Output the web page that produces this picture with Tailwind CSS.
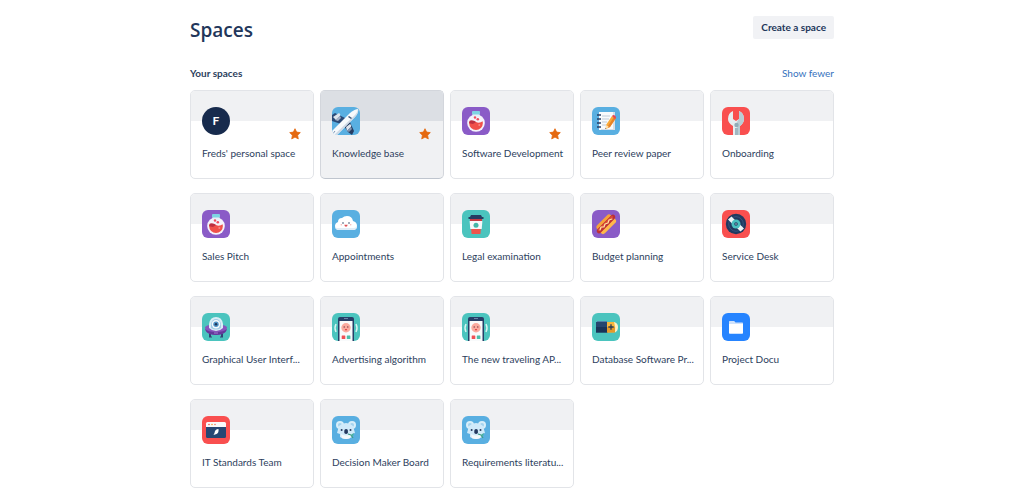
<!DOCTYPE html>
<html lang="en">
<head>
<meta charset="utf-8">
<meta name="viewport" content="width=device-width, initial-scale=1">
<title>Spaces</title>
<script src="https://cdn.jsdelivr.net/npm/@tailwindcss/browser@4"></script>
</head>
<body class="bg-white font-['Lato','Open_Sans',sans-serif] text-[#2c3e5d]">
<svg class="absolute size-0" aria-hidden="true">
  <defs>
    <clipPath id="tile"><rect width="28" height="28" rx="6"/></clipPath>
    <clipPath id="flask-bowl"><circle cx="14" cy="16" r="6.9"/></clipPath>
  </defs>
  <symbol id="user" viewBox="0 0 28 28">
    <circle cx="14" cy="14" r="14" fill="#172b4d"/>
  </symbol>
  <symbol id="plane" viewBox="0 0 28 28">
    <g clip-path="url(#tile)">
      <rect width="28" height="28" fill="#59afe1"/>
      <path d="M0 8 3 6 15 12 9 17 0 14Z" fill="#2b4a77"/>
      <path d="M12 19 17 13 22 24 20 28 16 25Z" fill="#243d63"/>
      <path d="M0 28V24L18 6Q23 2 26 2Q27 5 23 10L5 28Z" fill="#f7fafc"/>
      <path d="M2 28 23 8Q26 5 26 2Q27 6 23 10L5 28Z" fill="#cfdae6"/>
      <path d="M1 10 7 6Q9 7 8 9L4 13Z" fill="#dde5ee"/>
      <path d="m3 13 5-4 1 2-3 3Z" fill="#a4b1c7"/>
      <path d="m14 20 4-3Q20 18 19 20L15 24Z" fill="#dde5ee"/>
      <path d="m15 24 4-4 1 2-3 3Z" fill="#8193b0"/>
      <path d="m17 9 3 2-1 1-3-2Z" fill="#3f5779"/>
      <path d="m0 28 3-4" stroke="#8193b0" stroke-width="1"/>
    </g>
  </symbol>
  <symbol id="flask" viewBox="0 0 28 28">
    <rect width="28" height="28" rx="6" fill="#8a5bc7"/>
    <circle cx="14" cy="16" r="8.8" fill="#f5f3fb"/>
    <path d="M10.5 6h7v4h-7z" fill="#e8eef8"/>
    <rect x="10" y="4" width="8" height="3.4" rx="1" fill="#7ed4e3"/>
    <g clip-path="url(#flask-bowl)">
      <path d="M6 15q4-2 8 0t8-2v12H6z" fill="#f0504a"/>
      <path d="M6 14q5-2 8 1l-3 2-5-1z" fill="#bd3040"/>
    </g>
    <circle cx="13" cy="10.5" r="1.2" fill="#ee4d60"/>
    <circle cx="15.8" cy="12.3" r="1.3" fill="#ee4d60"/>
    <circle cx="17.3" cy="18" r="1" fill="#f98a84"/>
  </symbol>
  <symbol id="notes" viewBox="0 0 28 28">
    <rect width="28" height="28" rx="6" fill="#59afe1"/>
    <path d="M7 5h16v18H7z" fill="#f8fafc"/>
    <path d="M21 5h2v18H9v-1h12z" fill="#d7dfe8"/>
    <path d="M10 9h8M10 12h7M10 15h5M10 18h4" stroke="#c0cbd8"/>
    <path d="M5 8h4M5 12h4M5 16h4M5 20h4" stroke="#263e64" stroke-width="1.3"/>
    <path d="m14 18 6-9 4 2-6 9-4 2z" fill="#f9a93a"/>
    <path d="m16 19 6-9 2 1-6 9-2 1z" fill="#e78227"/>
    <path d="m20 9 1-1q3 0 3 3l-1 1z" fill="#e74852"/>
    <path d="m14 18 3 2-4 2z" fill="#ffe1b5"/>
    <path d="m13 21 1 .5-1 .6z" fill="#263e64"/>
  </symbol>
  <symbol id="wrench" viewBox="0 0 28 28">
    <g clip-path="url(#tile)">
      <rect width="28" height="28" fill="#f94f4f"/>
      <path d="M11 4Q6 6 6 12q0 4 5 7v9h7v-9q4-3 4-7 0-6-5-8v8l-3 2-3-2z" fill="#e6edf0"/>
      <path d="M17 4q5 2 5 8 0 4-4 7v9h-3V15l2-3z" fill="#b9cdd5"/>
      <circle cx="14.5" cy="18" r="2.2" fill="#91adb9"/>
      <path d="M13 21h3v7h-3z" fill="#a0b8c2"/>
    </g>
  </symbol>
  <symbol id="cloud" viewBox="0 0 28 28">
    <rect width="28" height="28" rx="6" fill="#59afe1"/>
    <path d="M7 20q-4 0-4-4 0-3 3-4 0-4 4-4 2-2 5-2 5 0 6 5 4 1 4 5t-4 4z" fill="#fff"/>
    <path d="M3 16q0 2 3 2h16q2 0 3-2 0 4-4 4H7q-4 0-4-4" fill="#e1edf7"/>
    <circle cx="11" cy="13" r=".8" fill="#304463"/><circle cx="17" cy="13" r=".8" fill="#304463"/>
    <path d="M12.3 14.7h3.4q-.3 2-1.7 2t-1.7-2" fill="#df4f55"/>
    <circle cx="9.3" cy="14.7" r=".8" fill="#f5b9b6"/><circle cx="18.7" cy="14.7" r=".8" fill="#f5b9b6"/>
  </symbol>
  <symbol id="coffee" viewBox="0 0 28 28">
    <rect width="28" height="28" rx="6" fill="#4bc4be"/>
    <path d="M8 8h12l-1.6 16H9.6z" fill="#ef544c"/>
    <path d="M7.6 11h12.8l-.7 8H8.3z" fill="#f6f8f9"/>
    <path d="M8 9h12v2H8z" fill="#c73c43"/>
    <path d="M9 5h10l1 2h1.5v2h-15V7H8z" fill="#263d61"/>
    <circle cx="14" cy="15.2" r="2.5" fill="#43b6a7"/>
  </symbol>
  <symbol id="hotdog" viewBox="0 0 28 28">
    <rect width="28" height="28" rx="6" fill="#8a5bc7"/>
    <g fill="none" stroke-linecap="round">
      <path d="M7.5 17 17 7.5" stroke="#f6a23a" stroke-width="6"/>
      <path d="M11 21 21 11" stroke="#ffb84a" stroke-width="6"/>
      <path d="M7 21 21 7" stroke="#bd3035" stroke-width="4.6"/>
      <path d="M7 20 20 7" stroke="#df4c37" stroke-width="2"/>
      <path d="m8 20 1-3 3 0 1-3 3-1 1-3 3-1" stroke="#ffe3a0" stroke-width="1.2" stroke-linejoin="round"/>
    </g>
  </symbol>
  <symbol id="disc" viewBox="0 0 28 28">
    <rect width="28" height="28" rx="6" fill="#f94f4f"/>
    <circle cx="14" cy="14" r="10.2" fill="#21395f"/>
    <circle cx="14" cy="14" r="7.3" fill="none" stroke="#36547d"/>
    <path d="M6 9.500 9.500 6.500 14 11 11 14.500zM22 18.500 18.500 21.500 14 17 17 13.500z" fill="#edf3f6"/>
    <circle cx="14" cy="14" r="4.5" fill="#49bfc0"/>
    <circle cx="14" cy="14" r="1.8" fill="#1d4262"/>
    <circle cx="14" cy="14" r=".7" fill="#cce"/>
  </symbol>
  <symbol id="ufo" viewBox="0 0 28 28">
    <rect width="28" height="28" rx="6" fill="#4bc4be"/>
    <path d="M8 18v6M20 18v6" stroke="#304575" stroke-width="2"/>
    <path d="M7 24h3M18 24h3" stroke="#304575"/>
    <path d="M3 14q2-2 5-2h12q3 0 5 2 0 5-5 7-6 2-12 0-5-2-5-7" fill="#8755bd"/>
    <path d="M3 16q3 3 11 3t11-3q-1 4-5 5-6 2-12 0-4-1-5-5" fill="#633a9a"/>
    <path d="M7 15V11q1-7 7-7t7 7v4q-3 3-7 3t-7-3" fill="#d9eef6"/>
    <path d="M9 15v-4q1-5 5-5t5 5v4q-5 3-10 0" fill="#a3cae6"/>
    <circle cx="14" cy="11.2" r="4.2" fill="#f4fafc"/>
    <circle cx="14" cy="11.2" r="2.7" fill="#4e91c5"/><circle cx="14" cy="11.2" r="1.2" fill="#1f3558"/>
    <path d="M12 20h4" stroke="#a77bd3"/>
  </symbol>
  <symbol id="phone" viewBox="0 0 28 28">
    <g clip-path="url(#tile)">
      <rect width="28" height="28" fill="#4bc4be"/>
      <path d="M4 11q-2 4 0 8M24 11q2 4 0 8" fill="none" stroke="#d7f4f1" stroke-width="1.5"/>
      <path d="M6 6q0-2 2-2h12q2 0 2 2v22H6z" fill="#263f67"/>
      <path d="M7.5 8h13v20h-13z" fill="#f8fafb"/>
      <path d="M12 5.5h4" stroke="#6b83a6"/>
      <circle cx="14" cy="14.8" r="4.7" fill="#faaba0"/>
      <circle cx="12.2" cy="14" r=".7" fill="#763b48"/><circle cx="15.8" cy="14" r=".7" fill="#763b48"/>
      <path d="M12.8 16h2.4q-.3 1.5-1.2 1.5T12.8 16" fill="#df464a"/>
      <rect x="9.7" y="22.5" width="3.6" height="3.4" rx=".5" fill="#ee5055"/>
      <rect x="14.8" y="22.5" width="3.6" height="3.4" rx=".5" fill="#4bbda9"/>
    </g>
  </symbol>
  <symbol id="battery" viewBox="0 0 28 28">
    <rect width="28" height="28" rx="6" fill="#4bc4be"/>
    <path d="M4 9h12v10.5H4z" fill="#25466f"/><path d="M4 14h12v5.500H4z" fill="#193458"/>
    <path d="M15 9h7q3 1 3 5.200t-3 5.300h-7z" fill="#f7b63d"/>
    <path d="M22 9q4 1 4 5t-3 5.500q1-5-1-10.500" fill="#fff0c5"/>
    <path d="M15 14h8v5.500h-8z" fill="#e59a2b"/>
    <path d="M19 11.300v5.400M16.300 14h5.400" stroke="#263b57" stroke-width="1.300"/>
    <path d="M5 8.500h10" stroke="#5082a8"/>
  </symbol>
  <symbol id="folder" viewBox="0 0 28 28">
    <rect width="28" height="28" rx="6" fill="#2684ff"/>
    <path d="M7 10V8.500Q7 8 7.700 8h4.500l1.300 1.500h6.800q.7 0 .7.700v1H7z" fill="#cfe2fb"/>
    <path d="M7 11h14v9q0 .8-.8.8H7.800Q7 20.800 7 20z" fill="#fff"/>
  </symbol>
  <symbol id="browser" viewBox="0 0 28 28">
    <rect width="28" height="28" rx="6" fill="#f94f4f"/>
    <path d="M5.500 6h17q1.500 0 1.500 1.500V11H4V7.500Q4 6 5.500 6" fill="#f8fafb"/>
    <path d="M4 11h20v9.500q0 1.500-1.500 1.500h-17Q4 22 4 20.500z" fill="#264773"/>
    <circle cx="7" cy="8.500" r=".8" fill="#ef5350"/><circle cx="10" cy="8.500" r=".8" fill="#ec9b38"/><circle cx="13" cy="8.500" r=".8" fill="#ef7568"/>
    <path d="M16.500 13q-3.500 0-4 4l-1 2 3-1q2.500-1 2-5" fill="#fff"/>
  </symbol>
  <symbol id="koala" viewBox="0 0 28 28">
    <g clip-path="url(#tile)">
      <rect width="28" height="28" fill="#59afe1"/>
      <circle cx="8" cy="9" r="4" fill="#d8eef9"/><circle cx="20" cy="9" r="4" fill="#d8eef9"/>
      <circle cx="8" cy="9" r="2" fill="#a3d3ee"/><circle cx="20" cy="9" r="2" fill="#a3d3ee"/>
      <path d="M7 10q3-3 7-3t7 3l2 7-3 1v3q-2 2-6 2t-6-2v-3l-3-1z" fill="#d0eafa"/>
      <path d="M9 18q5 3 10 0l-1 4q-4 2-8 0z" fill="#f3f9fc"/>
      <rect x="12.300" y="13" width="3.600" height="5" rx="1.700" fill="#243a60"/>
      <circle cx="9.600" cy="14" r="1" fill="#243a60"/><circle cx="18.500" cy="14" r="1" fill="#243a60"/>
      <path d="m16 18 3 1 2 3" fill="none" stroke="#3d9d87" stroke-width="1.300"/>
      <path d="m19 19 3-2-1 3z" fill="#4bb59a"/>
    </g>
  </symbol>
  <symbol id="star" viewBox="0 0 12 12">
    <path d="m6 .7 1.600 3.400 3.700.5-2.700 2.600.7 3.700L6 9.100l-3.300 1.800.7-3.700L.7 4.600l3.700-.5z" fill="#e56910" stroke="#e56910" stroke-width=".8" stroke-linejoin="round"/>
  </symbol>
</svg>

<main class="mx-auto max-w-[668px] px-3 pt-4 pb-2">
  <header class="flex items-start justify-between">
    <h1 class="font-['Open_Sans',sans-serif] text-[19px] leading-7 font-semibold text-[#22365a]">Spaces</h1>
    <button type="button" class="h-[23px] rounded-[2px] bg-[#f1f2f5] px-2 text-[10px] font-bold text-[#22365a] hover:bg-gray-200">Create a space</button>
  </header>
  <section aria-labelledby="your-spaces">
    <div class="mt-[21px] flex h-4 items-center justify-between text-[10px] leading-4">
      <h2 id="your-spaces" class="font-bold">Your spaces</h2>
      <a href="#" class="text-[#3672bd] hover:underline">Show fewer</a>
    </div>
    <ul id="space-list" class="mt-[9px] grid grid-cols-5 gap-x-[6px] gap-y-[14px]"></ul>
  </section>
</main>

<script>
  const spaces = [
    ["Freds' personal space", "user", true], ["Knowledge base", "plane", true], ["Software Development", "flask", true], ["Peer review paper", "notes"], ["Onboarding", "wrench"],
    ["Sales Pitch", "flask"], ["Appointments", "cloud"], ["Legal examination", "coffee"], ["Budget planning", "hotdog"], ["Service Desk", "disc"],
    ["Graphical User Interf...", "ufo"], ["Advertising algorithm", "phone"], ["The new traveling AP...", "phone"], ["Database Software Pr...", "battery"], ["Project Docu", "folder"],
    ["IT Standards Team", "browser"], ["Decision Maker Board", "koala"], ["Requirements literatu...", "koala"]
  ];
  const activeSpace = "Knowledge base";
  document.getElementById("space-list").innerHTML = spaces.map(([name, icon, starred]) => {
    const active = name === activeSpace;
    return `
    <li class="h-[89px] overflow-hidden rounded-[5px] border ${active ? "border-[#d3d6dc] border-b-[#bfc5ce] bg-[#f0f1f3]" : "border-[#e2e4e8] bg-white"}">
      <div class="h-[30px] ${active ? "bg-[#dcdfe4]" : "bg-[#f0f1f3]"}"></div>
      <div class="-mt-[14px] flex items-end justify-between pr-3 pl-[11px]">
        <span class="grid size-7 place-items-center">
          <svg class="col-start-1 row-start-1 size-7" aria-hidden="true"><use href="#${icon}"/></svg>
          ${icon === "user" ? '<span class="col-start-1 row-start-1 text-[12px] leading-4 font-bold text-white">F</span>' : ""}
        </span>
        ${starred ? `<button type="button" class="-mb-[5px] size-3" aria-label="Unstar ${name}"><svg class="size-3" aria-hidden="true"><use href="#star"/></svg></button>` : ""}
      </div>
      <a href="#" class="mt-[10px] block pl-[11px] text-[10px] leading-4 whitespace-nowrap hover:underline">${name}</a>
    </li>`;
  }).join("");
</script>
</body>
</html>
